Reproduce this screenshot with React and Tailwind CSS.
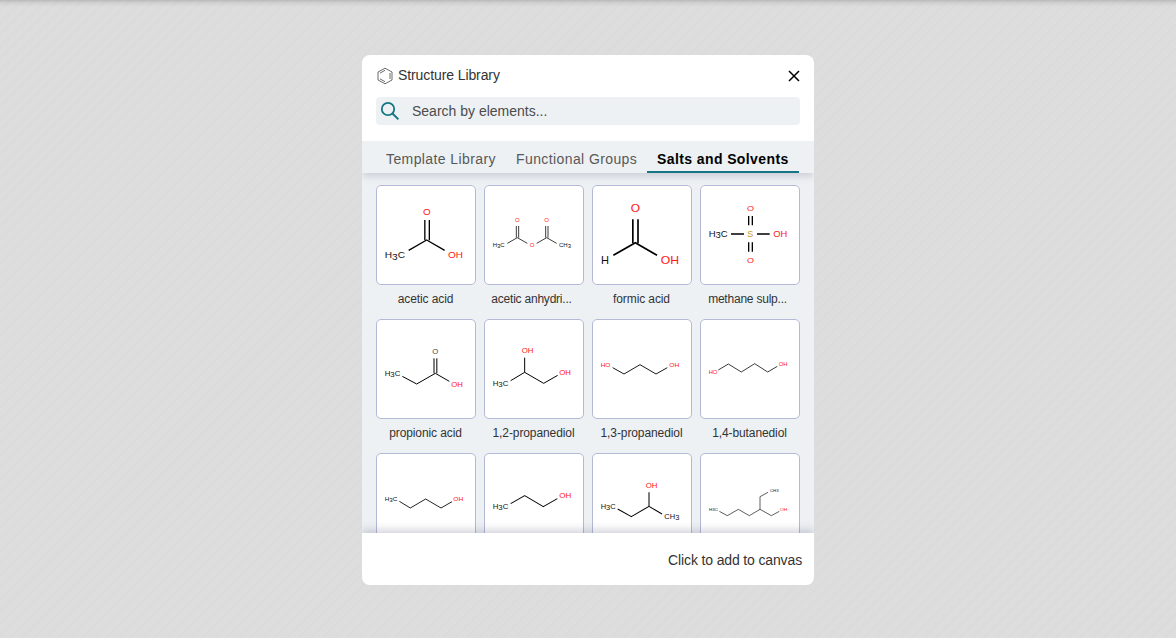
import React from "react";

const RED = "#ff1414";
const INK = "#111111";

// Depictions use a 300-unit square. A label is [text, left, right, baseline, cap height, colour].
const structures = [
  {
    id: "acetic-acid", name: "acetic acid", stroke: 4,
    bonds: ["M98 196L152 165L206 196", "M146.5 105V166M160 105V166"],
    labels: [["O", 141, 164, 89, 17, RED], ["H3C", 26, 87, 219, 18, INK], ["OH", 216, 261, 219, 18, RED]],
  },
  {
    id: "acetic-anhydride", name: "acetic anhydri...", stroke: 2.3,
    bonds: ["M70 175L100 158L130 175M158 175L188 158L218 175", "M97 123V158M104 123V158M185 123V158M192 123V158"],
    labels: [["O", 93, 107, 112, 10.5, RED], ["O", 181, 195, 112, 10.5, RED], ["O", 137, 151, 187, 10.5, RED], ["H3C", 26, 62, 187, 11.5, INK], ["CH3", 225, 261, 187, 11.5, INK]],
  },
  {
    id: "formic-acid", name: "formic acid", stroke: 5,
    bonds: ["M64 211L130 173L195 211", "M122.5 103V175M138 103V175"],
    labels: [["O", 116, 144, 81, 22, RED], ["H", 27, 51, 237, 22, INK], ["OH", 206, 261, 237, 22, RED]],
  },
  {
    id: "methanesulfonic-acid", name: "methane sulp...", stroke: 4,
    bonds: ["M93 147H132M171 147H209", "M146 93V121M157 93V121M146 172V200M157 172V200"],
    labels: [["S", 142, 160, 155, 17, "#c99a19"], ["O", 141, 162, 77, 16, RED], ["O", 141, 162, 233, 16, RED], ["H3C", 26, 83, 156, 17, INK], ["OH", 220, 262, 156, 17, RED]],
  },
  {
    id: "propionic-acid", name: "propionic acid", stroke: 3,
    bonds: ["M79 172L122 195L178 163L220 187", "M174 118V163M182.5 118V163"],
    labels: [["O", 169, 187, 104, 14, "#444444"], ["H3C", 26, 73, 170, 14.5, INK], ["OH", 226, 261, 203, 14.5, RED]],
  },
  {
    id: "1,2-propanediol", name: "1,2-propanediol", stroke: 3,
    bonds: ["M80 185L122 160L179 193L221 169M122 116V160"],
    labels: [["OH", 113, 148, 101, 14.5, RED], ["H3C", 26, 73, 200, 14.5, INK], ["OH", 226, 261, 167, 14.5, RED]],
  },
  {
    id: "1,3-propanediol", name: "1,3-propanediol", stroke: 2.7,
    bonds: ["M62 146L96 165L144 137L192 165L226 146"],
    labels: [["HO", 26, 55, 144, 12, RED], ["OH", 232, 262, 144, 12, RED]],
  },
  {
    id: "1,4-butanediol", name: "1,4-butanediol", stroke: 2.3,
    bonds: ["M55 153L85 135L124 159L164 134L203 159L232 142"],
    labels: [["HO", 26, 52, 164, 10.5, RED], ["OH", 236, 262, 140, 10.5, RED]],
  },
  {
    id: "1-butanol", stroke: 2.6,
    bonds: ["M70 145L103 165L149 138L195 165L228 146"],
    labels: [["H3C", 26, 64, 144, 12, INK], ["OH", 232, 262, 144, 12, RED]],
  },
  {
    id: "1-propanol", stroke: 3.1,
    bonds: ["M80 152L122 128L178 161L220 137"],
    labels: [["H3C", 26, 73, 167, 14.5, INK], ["OH", 226, 262, 134, 14.5, RED]],
  },
  {
    id: "2-butanol", stroke: 3.1,
    bonds: ["M77 168L118 191L171 160L210 183M171 118V160"],
    labels: [["OH", 161, 196, 104, 14.5, RED], ["H3C", 26, 71, 167, 14.5, INK], ["CH3", 217, 262, 197, 14.5, INK]],
  },
  {
    id: "2-ethylhexanol", stroke: 1.9,
    bonds: ["M58 175L82 188L115 169L148 188L180 169L214 188L238 175M180 169V131L204 118"],
    labels: [["H3C", 27, 54, 173, 8.5, INK], ["OH", 240, 262, 173, 8.5, RED], ["CH3", 210, 236, 116, 8.5, INK]],
  },
];

function AtomLabel({ label }) {
  const [text, left, right, base, cap, color] = label;
  const shift = cap * 0.26;
  return (
    <text x={left} y={base} fontSize={cap / 0.67} fill={color} textLength={right - left} lengthAdjust="spacingAndGlyphs">
      {text.split("").map((c, i) => (
        <tspan key={i} dy={c === "3" ? shift : text[i - 1] === "3" ? -shift : 0}>{c}</tspan>
      ))}
    </text>
  );
}

function StructureCard({ item }) {
  const truncated = item.name?.endsWith("...");
  return (
    <div className="flex w-[100px] flex-col">
      <div className="h-[100px] w-[100px] overflow-hidden rounded-[5px] border border-[#b4b9d6] bg-white">
        <svg viewBox="3 3 294 294" className="block h-full w-full" fontFamily="Liberation Sans, Arial, sans-serif">
          {item.bonds.map((d) => (
            <path key={d} d={d} fill="none" stroke="#000" strokeWidth={item.stroke} strokeLinejoin="round" />
          ))}
          {item.labels.map((l, i) => <AtomLabel key={i} label={l} />)}
        </svg>
      </div>
      {item.name && (
        <div className={`h-[34px] whitespace-nowrap pt-[6px] text-center text-[12px] leading-4 text-[#333] ${truncated ? "pr-[5px] tracking-[-0.22px]" : "pr-[1px] tracking-[-0.1px]"}`}>
          {item.name}
        </div>
      )}
    </div>
  );
}

export default function App() {
  return (
    <div className="h-[638px] w-[1176px] bg-[#dddddd] bg-[repeating-linear-gradient(135deg,transparent_0px,transparent_6.5px,#d9d9d9_7.75px,#dddddd_8.5px)] font-['Liberation_Sans',Arial,sans-serif]">
      <div className="flex h-full justify-center bg-[linear-gradient(to_bottom,rgba(0,0,0,0.16),rgba(0,0,0,0.05)_3px,transparent_7px)] pt-[55px]">
        <div className="flex h-[530px] w-[452px] flex-col overflow-hidden rounded-[8px] bg-white">
          <header className="flex h-[42px] shrink-0 items-center px-[14px]">
            <svg viewBox="0 0 18 18" className="h-[18px] w-[18px]" fill="none" stroke="#444" strokeWidth="0.8">
              <path d="M9 1.2L16 5V13L9 16.8L2 13V5ZM4 6.1L9 3.3M14 6V12M4 11.9L9 14.7" />
            </svg>
            <h1 className="ml-[4px] pb-[2px] text-[14px] leading-5 tracking-[-0.1px] text-[#333]">Structure Library</h1>
            <svg viewBox="0 0 12 12" className="ml-auto h-3 w-3" stroke="#000" strokeWidth="1.5">
              <path d="M1 1L11 11M11 1L1 11" />
            </svg>
          </header>
          <div className="mx-[14px] flex h-7 shrink-0 items-center rounded-[4px] bg-[#edf1f4]">
            <svg viewBox="0 0 20 20" className="ml-[4px] h-5 w-5" fill="none" stroke="#167782" strokeWidth="1.8">
              <circle cx="8" cy="8" r="6.2" />
              <path d="M12.2 12.2L18.4 18.4" strokeWidth="2" />
            </svg>
            <span className="ml-[12px] text-[14px] text-[#4c4c4c]">Search by elements...</span>
          </div>
          <nav className="z-10 mt-4 flex h-8 shrink-0 bg-[#edf1f4] pl-[14px] text-[14px] text-[#585858] shadow-[0_5px_6px_-1px_rgba(103,104,132,0.22)]">
            <div className="w-[130px] whitespace-nowrap pl-[10px] pt-[8px] leading-5 tracking-[0.4px]">Template Library</div>
            <div className="w-[141px] whitespace-nowrap pl-[10px] pt-[8px] leading-5 tracking-[0.4px]">Functional Groups</div>
            <div className="w-[152px] whitespace-nowrap border-b-2 border-[#167782] pl-[10px] pt-[8px] font-bold leading-5 tracking-[0.4px] text-black">Salts and Solvents</div>
          </nav>
          <main className="grid min-h-0 flex-1 grid-cols-[repeat(4,100px)] content-start gap-x-2 overflow-hidden bg-[#edf1f4] px-[14px] pt-[12px]">
            {structures.map((s) => <StructureCard key={s.id} item={s} />)}
          </main>
          <footer className="z-10 flex h-[52px] shrink-0 items-center justify-end bg-white pr-[12px] pt-[2px] text-[14px] tracking-[-0.14px] text-[#333] shadow-[0_-3px_8px_rgba(103,104,132,0.3)]">
            Click to add to canvas
          </footer>
        </div>
      </div>
    </div>
  );
}
